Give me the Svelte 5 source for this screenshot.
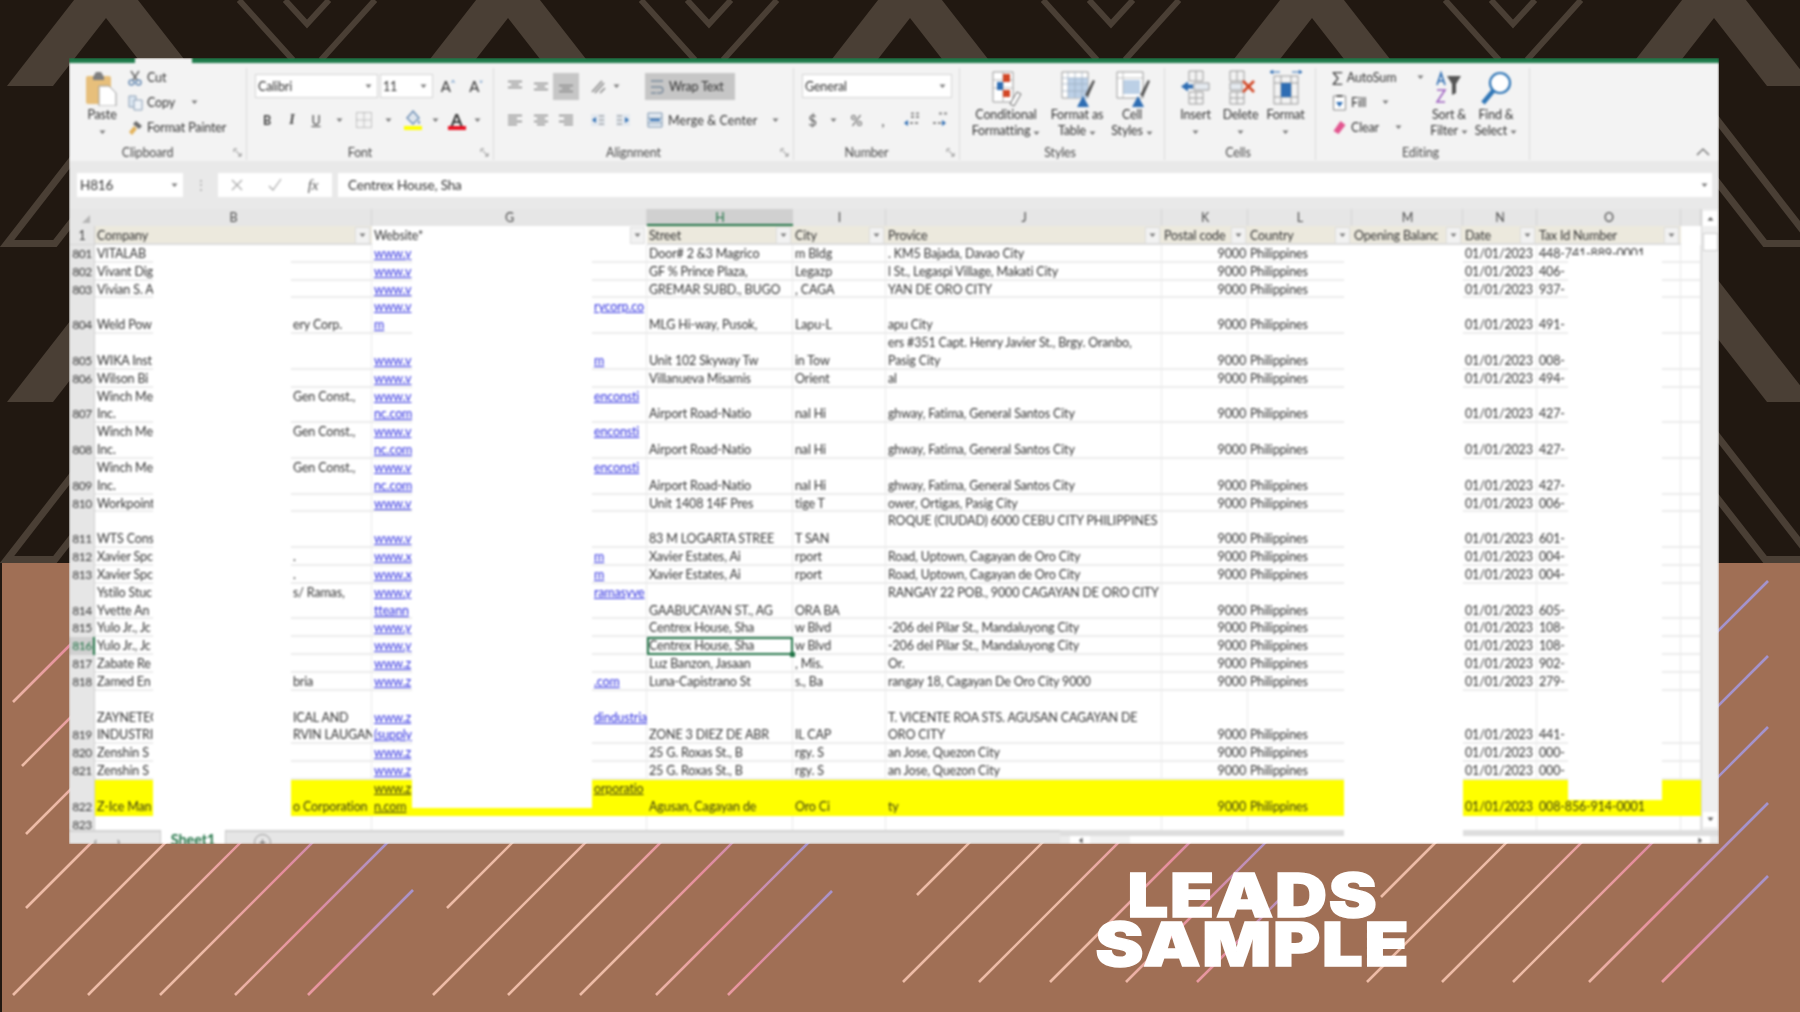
<script>
	// background pattern
	const thickX = [106, 508, 910, 1312, 1714];
	const thinX = [307, 709, 1111, 1513];
	const rowsY = [0, 316];

	const blocks = [
		{ id: "a", dx: 0, dy: 0, right: 413, xs: [13, 88, 160, 235, 308] },
		{ id: "b", dx: 420, dy: 0, right: 832, xs: [433, 508, 580, 656, 728] },
		{ id: "c", dx: 890, dy: -13, right: 1285, xs: [903, 979, 1050, 1126, 1197] },
		{ id: "d", dx: 1354, dy: -13, right: 1768, xs: [1367, 1442, 1513, 1589, 1662] }
	];
	const strays = [[447, 908], [917, 895], [1381, 897]];
	const upperLeft = [[13, 702], [22, 766], [26, 834], [26, 908]];

	// column headers
	const letters = ["B", "G", "H", "I", "J", "K", "L", "M", "N", "O", ""];
	const heads = ["Company", "Website*", "Street", "City", "Provice", "Postal code", "Country", "Opening Balanc", "Date", "Tax Id Number"];

	const w = "www.";
	const rows = [
		["801", "VITALAB", "", w + "y", "", "Door# 2 &3 Magrico", "m Bldg", ". KM5 Bajada, Davao City", "448-741-889-0001"],
		["802", "Vivant Dig", "", w + "v", "", "GF % Prince Plaza,", "Legazp", "l St., Legaspi Village, Makati City", "406-"],
		["803", "Vivian S. A", "", w + "v", "", "GREMAR SUBD., BUGO", ", CAGA", "YAN DE ORO CITY", "937-"],
		["804", "Weld Pow", "ery Corp.", w + "v\nm", "rycorp.co\n", "MLG Hi-way, Pusok,", "Lapu-L", "apu City", "491-"],
		["805", "WIKA Inst", "", w + "v", "m", "Unit 102 Skyway Tw", "in Tow", "ers #351 Capt. Henry Javier St., Brgy. Oranbo,\nPasig City", "008-"],
		["806", "Wilson Bi", "", w + "v", "", "Villanueva Misamis", "Orient", "al", "494-"],
		["807", "Winch Me\nInc.", "Gen Const.,\n", w + "v\nnc.com", "enconsti\n", "Airport Road-Natio", "nal Hi", "ghway, Fatima, General Santos City", "427-"],
		["808", "Winch Me\nInc.", "Gen Const.,\n", w + "v\nnc.com", "enconsti\n", "Airport Road-Natio", "nal Hi", "ghway, Fatima, General Santos City", "427-"],
		["809", "Winch Me\nInc.", "Gen Const.,\n", w + "v\nnc.com", "enconsti\n", "Airport Road-Natio", "nal Hi", "ghway, Fatima, General Santos City", "427-"],
		["810", "Workpoint", "", w + "v", "", "Unit 1408 14F Pres", "tige T", "ower, Ortigas, Pasig City", "006-"],
		["811", "WTS Cons", "", w + "v", "", "83 M LOGARTA STREE", "T SAN", "ROQUE (CIUDAD) 6000 CEBU CITY  PHILIPPINES\n", "601-"],
		["812", "Xavier Spc", ".", w + "x", "m", "Xavier Estates, Ai", "rport", "Road, Uptown, Cagayan de Oro City", "004-"],
		["813", "Xavier Spc", ".", w + "x", "m", "Xavier Estates, Ai", "rport", "Road, Uptown, Cagayan de Oro City", "004-"],
		["814", "Ystilo Stuc\nYvette An", "s/ Ramas,\n", w + "y\ntteann", "ramasyve\n", "GAABUCAYAN ST., AG", "ORA BA", "RANGAY 22 POB., 9000 CAGAYAN DE ORO CITY\n", "605-"],
		["815", "Yulo Jr., Jc", "", w + "y", "", "Centrex House, Sha", "w Blvd", "-206 del Pilar St., Mandaluyong City", "108-"],
		["816", "Yulo Jr., Jc", "", w + "y", "", "Centrex House, Sha", "w Blvd", "-206 del Pilar St., Mandaluyong City", "108-"],
		["817", "Zabate Re", "", w + "z", "", "Luz Banzon, Jasaan", ", Mis.", "Or.", "902-"],
		["818", "Zamed En", "bria", w + "z", ".com", "Luna-Capistrano St", "s., Ba", "rangay 18, Cagayan De Oro City 9000", "279-"],
		["\n\n819", "ZAYNETEC\nINDUSTRI", "ICAL AND\nRVIN LAUGAN", w + "z\n(supply", "dindustria\n", "ZONE 3 DIEZ DE ABR", "IL CAP", "T. VICENTE ROA STS. AGUSAN CAGAYAN DE\nORO CITY", "441-"],
		["820", "Zenshin S", "", w + "z", "", "25 G. Roxas St., B", "rgy. S", "an Jose, Quezon City", "000-"],
		["821", "Zenshin S", "", w + "z", "", "25 G. Roxas St., B", "rgy. S", "an Jose, Quezon City", "000-"],
		["\n822", "Z-Ice Man", "o Corporation", w + "z\nn.com", "orporatio\n", "Agusan, Cagayan de", "Oro Ci", "ty", "008-856-914-0001"],
		["823", "", "", "", "", "", "", "", ""]
	];
</script>

{#snippet caret()}
	<svg class="caret" width="7" height="5" viewBox="0 0 7 5"><path d="M0.5 0.5h6L3.5 4z" fill="#777" /></svg>
{/snippet}

{#snippet lines(t)}
	{#each t.split("\n") as l}
		<div class="ln">{l}</div>
	{/each}
{/snippet}

{#snippet launcher()}
	<svg class="launch" width="9" height="9" viewBox="0 0 9 9"><path d="M1 1h3M1 1v3M3 3l5 5M8 5v3H5" fill="none" stroke="#888" /></svg>
{/snippet}

<div class="page">
	<svg class="backdrop" width="1800" height="1012" viewBox="0 0 1800 1012">
		<defs>
			{#each blocks as b}
				<linearGradient id={"grad-" + b.id} gradientUnits="userSpaceOnUse" x1={220 + b.dx} y1={995 + b.dy} x2={420 + b.dx} y2={895 + b.dy}>
					<stop offset="0" stop-color="#edbba6" />
					<stop offset="0.5" stop-color="#e58c9d" />
					<stop offset="1" stop-color="#a493cc" />
				</linearGradient>
			{/each}
			<linearGradient id="grad-up" gradientUnits="userSpaceOnUse" x1="50" y1="800" x2="204" y2="723">
				<stop offset="0" stop-color="#edbba6" />
				<stop offset="0.5" stop-color="#e58c9d" />
				<stop offset="1" stop-color="#a493cc" />
			</linearGradient>
		</defs>

		<rect width="1800" height="563" fill="#211811" />
		{#each rowsY as y}
			{#each thickX as x}
				<path d="M{x} {y - 41}L{x + 99} {y + 86}H{x + 53}L{x} {y + 18}L{x - 53} {y + 86}H{x - 99}Z" fill="#4a3f35" />
				<path d="M{x} {y + 116}L{x + 99} {y + 243.5}H{x + 51}L{x} {y + 178}L{x - 51} {y + 243.5}H{x - 99}Z" fill="none" stroke="#4a3f35" stroke-width="7" />
			{/each}
		{/each}
		{#each thinX as x}
			<path d="M{x - 68} 0L{x - 14} 60M{x + 68} 0L{x + 14} 60M{x - 22} 0L{x} 24L{x + 22} 0" fill="none" stroke="#4a3f35" stroke-width="6" />
		{/each}

		<rect x="2" y="563" width="1798" height="449" fill="#a06f55" />
		<rect y="563" width="2" height="449" fill="#211811" />

		<g stroke-width="2.6" fill="none">
			{#each blocks as b}
				{#each b.xs as x}
					<path d="M{x} {995 + b.dy}L{b.right} {995 + b.dy - (b.right - x)}" stroke={"url(#grad-" + b.id + ")"} />
				{/each}
			{/each}
			{#each upperLeft as p}
				<path d="M{p[0]} {p[1]}L{p[0] + 120} {p[1] - 120}" stroke="url(#grad-up)" />
			{/each}
			{#each strays as p}
				<path d="M{p[0]} {p[1]}L{p[0] + 120} {p[1] - 120}" stroke="#edbba6" />
			{/each}
		</g>
	</svg>

	<div class="window">
		<div class="titlebar"><div class="home-tab"></div></div>

		<div class="ribbon">
			<section class="group clip">
				<div class="body">
					<div class="big paste">
						<svg width="34" height="36" viewBox="0 0 34 36">
							<rect x="1" y="6" width="25" height="28" rx="2" fill="#e7bf7b" />
							<path d="M8 7l3-5h5l3 5v3H8z" fill="#7f7f7f" />
							<path d="M14 16h10l7 7v13H14z" fill="#fff" stroke="#9a9a9a" />
						</svg>
						<span>Paste</span>
						<span class="arrow">{@render caret()}</span>
					</div>
					<div class="smalls">
						<div class="small">
							<svg width="15" height="16" viewBox="0 0 15 16"><path d="M3 1l6 9M11 1L5 10" stroke="#666" stroke-width="1.5" fill="none" /><circle cx="3.5" cy="12.5" r="2.5" fill="none" stroke="#6d8fb5" stroke-width="1.5" /><circle cx="10.5" cy="12.5" r="2.5" fill="none" stroke="#6d8fb5" stroke-width="1.5" /></svg>
							<span>Cut</span>
						</div>
						<div class="small">
							<svg width="15" height="16" viewBox="0 0 15 16"><path d="M1 1h7v11H1z" fill="#dbe6f1" stroke="#8b9fb5" /><path d="M6 5h8v10H6z" fill="#eef3f8" stroke="#8b9fb5" /></svg>
							<span>Copy</span>
							<span class="arrow-r">{@render caret()}</span>
						</div>
						<div class="small">
							<svg width="15" height="16" viewBox="0 0 15 16"><path d="M8 1l6 5-3 3-6-5z" fill="#6b6b6b" /><path d="M6 6l3 3-5 6-3-3z" fill="#e3b35c" /></svg>
							<span>Format Painter</span>
						</div>
					</div>
				</div>
				<div class="label"><span>Clipboard</span>{@render launcher()}</div>
			</section>

			<section class="group font">
				<div class="body rows">
					<div class="row-a">
						<div class="combo calibri"><span>Calibri</span>{@render caret()}</div>
						<div class="combo size"><span>11</span>{@render caret()}</div>
						<div class="tb"><span class="ab">A<sup>^</sup></span></div>
						<div class="tb"><span class="ab">A<sup>˅</sup></span></div>
					</div>
					<div class="row-b">
						<div class="tb"><b>B</b></div>
						<div class="tb"><i class="it">I</i></div>
						<div class="tb"><u>U</u></div>
						<div class="tb">{@render caret()}</div>
						<div class="tb">
							<svg width="18" height="18" viewBox="0 0 18 18"><path d="M1.5 1.5h15v15h-15zM9 1.5v15M1.5 9h15" fill="none" stroke="#a9a9a9" stroke-dasharray="2 1" /></svg>
						</div>
						<div class="tb">{@render caret()}</div>
						<div class="tb">
							<svg width="20" height="22" viewBox="0 0 20 22"><path d="M10 2l6 7-6 6-6-6z" fill="#dfe6ee" stroke="#6d8fb5" stroke-width="1.4" /><path d="M16 11c1 2 2 3 0 4-2-1-1-2 0-4z" fill="#6d8fb5" /><rect x="1" y="17" width="18" height="4" fill="#ffff00" /></svg>
						</div>
						<div class="tb">{@render caret()}</div>
						<div class="tb fontcolor">
							<svg width="20" height="22" viewBox="0 0 20 22"><rect x="1" y="17" width="18" height="4" fill="#e81123" /></svg>
							<span>A</span>
						</div>
						<div class="tb">{@render caret()}</div>
					</div>
				</div>
				<div class="label"><span>Font</span>{@render launcher()}</div>
			</section>

			<section class="group align">
				<div class="body rows">
					<div class="row-a">
						<div class="tb"><svg class="ai" viewBox="0 0 16 12"><path d="M1 1h14M4 4h8M1 7h14" /></svg></div>
						<div class="tb"><svg class="ai" viewBox="0 0 16 12"><path d="M1 3h14M4 6h8M1 9h14" /></svg></div>
						<div class="tb active"><svg class="ai" viewBox="0 0 16 12"><path d="M1 5h14M4 8h8M1 11h14" /></svg></div>
						<div></div>
						<div class="tb"><svg width="18" height="18" viewBox="0 0 18 18"><path d="M3 14L13 3M6 15l9-10M11 15l5-5" stroke="#8a8a8a" stroke-width="1.6" fill="none" /></svg></div>
						<div class="tb">{@render caret()}</div>
						<div></div>
						<div class="wrap">
							<svg width="14" height="16" viewBox="0 0 14 16"><path d="M1 2h12M1 14h5M1 8h9a3 3 0 0 1 0 6H7" fill="none" stroke="#7a8a9c" stroke-width="1.3" /></svg>
							<span>Wrap Text</span>
						</div>
					</div>
					<div class="row-b">
						<div class="tb"><svg class="ai" viewBox="0 0 16 12"><path d="M1 1h14M1 4h9M1 7h14M1 10h9" /></svg></div>
						<div class="tb"><svg class="ai" viewBox="0 0 16 12"><path d="M1 1h14M4 4h8M1 7h14M4 10h8" /></svg></div>
						<div class="tb"><svg class="ai" viewBox="0 0 16 12"><path d="M1 1h14M6 4h9M1 7h14M6 10h9" /></svg></div>
						<div></div>
						<div class="tb"><svg width="18" height="16" viewBox="0 0 18 16"><path d="M2 2h14v12H2z" fill="#e4e9ef" /><path d="M3 8l4-3v6z" fill="#2e6db3" /><path d="M10 4h5M10 8h5M10 12h5" stroke="#8a8a8a" /></svg></div>
						<div class="tb"><svg width="18" height="16" viewBox="0 0 18 16"><path d="M2 2h14v12H2z" fill="#e4e9ef" /><path d="M15 8l-4-3v6z" fill="#2e6db3" /><path d="M3 4h5M3 8h5M3 12h5" stroke="#8a8a8a" /></svg></div>
						<div class="merge">
							<svg width="16" height="16" viewBox="0 0 16 16"><path d="M1 1h14v14H1zM1 6h14M1 11h14" fill="#e6edf4" stroke="#7a93ad" /><path d="M3 8h10" stroke="#2e6db3" stroke-width="2" /></svg>
							<span>Merge &amp; Center</span>
							<span class="arrow-r">{@render caret()}</span>
						</div>
					</div>
				</div>
				<div class="label"><span>Alignment</span>{@render launcher()}</div>
			</section>

			<section class="group number">
				<div class="body rows">
					<div class="row-a">
						<div class="combo general"><span>General</span>{@render caret()}</div>
					</div>
					<div class="row-b">
						<div class="tb big-glyph">$</div>
						<div class="tb">{@render caret()}</div>
						<div class="tb big-glyph">%</div>
						<div class="tb big-glyph">,</div>
						<div class="tb"><svg width="18" height="16" viewBox="0 0 18 16"><path d="M8 1.500h8M8 5h8M7 11h9" stroke="#8a8a8a" stroke-width="2" stroke-dasharray="3 2" /><path d="M1 11l4-3v6z" fill="#2e6db3" /></svg></div>
						<div class="tb"><svg width="18" height="16" viewBox="0 0 18 16"><path d="M8 1.500h8M2 11h8" stroke="#8a8a8a" stroke-width="2" stroke-dasharray="3 2" /><path d="M15 11l-4-3v6z" fill="#2e6db3" /></svg></div>
					</div>
				</div>
				<div class="label"><span>Number</span>{@render launcher()}</div>
			</section>

			<section class="group styles">
				<div class="body">
					<div class="big cf">
						<svg width="36" height="38" viewBox="0 0 36 36">
							<path d="M5 1h20v30H5z" fill="#fff" stroke="#9a9a9a" />
							<path d="M5 9h20M5 17h20M15 1v30" stroke="#b5b5b5" />
							<path d="M15 3h7v8h-7z" fill="#d24726" /><path d="M9 11h6v8H9z" fill="#2e6db3" /><path d="M15 19h7v7h-7z" fill="#d24726" />
							<path d="M22 33l7-12 4 2-7 12z" fill="#fff" stroke="#666" />
						</svg>
						<span>Conditional</span>
						<span>Formatting {@render caret()}</span>
					</div>
					<div class="big fat">
						<svg width="36" height="38" viewBox="0 0 36 36">
							<path d="M3 1h26v26H3z" fill="#fff" stroke="#9a9a9a" />
							<path d="M9 7h20v20H9z" fill="#bcd0e6" />
							<path d="M3 7h26M3 13h26M3 20h26M9 1v26M16 1v26M23 1v26" stroke="#9ab" stroke-width=".7" />
							<path d="M26 24L34 9l2 1-7 16z" fill="#555" /><path d="M18 36l6-11 6 11z" fill="#2e6db3" />
						</svg>
						<span>Format as</span>
						<span>Table {@render caret()}</span>
					</div>
					<div class="big cs">
						<svg width="36" height="38" viewBox="0 0 36 36">
							<path d="M3 1h26v26H3z" fill="#fff" stroke="#9a9a9a" />
							<path d="M9 9h17v14H9z" fill="#bcd0e6" />
							<path d="M3 7h26M9 1v26" stroke="#aaa" stroke-width=".7" />
							<path d="M26 24L34 9l2 1-7 16z" fill="#555" /><path d="M18 36l6-11 6 11z" fill="#2e6db3" />
						</svg>
						<span>Cell</span>
						<span>Styles {@render caret()}</span>
					</div>
				</div>
				<div class="label"><span>Styles</span></div>
			</section>

			<section class="group cells">
				<div class="body">
					<div class="big cellb">
						<svg width="34" height="36" viewBox="0 0 34 36">
							<path d="M10 1h14v10H10zM17 1v10M10 22h14v12H10zM17 22v12M10 28h14" fill="none" stroke="#9a9a9a" />
							<path d="M2 16.500l7-5v3h5v4H9v3z" fill="#2e6db3" />
							<path d="M15 13h15v7H15z" fill="#e4e9ef" stroke="#9a9a9a" />
						</svg>
						<span>Insert</span>
						<span class="arrow">{@render caret()}</span>
					</div>
					<div class="big cellb">
						<svg width="34" height="36" viewBox="0 0 34 36">
							<path d="M6 1h14v10H6zM13 1v10M6 22h14v12H6zM13 22v12M6 28h14" fill="none" stroke="#9a9a9a" />
							<path d="M6 13h12v7H6z" fill="#e4e9ef" stroke="#9a9a9a" />
							<path d="M19 11l11 11M30 11L19 22" stroke="#d24726" stroke-width="2.600" />
						</svg>
						<span>Delete</span>
						<span class="arrow">{@render caret()}</span>
					</div>
					<div class="big cellb">
						<svg width="34" height="36" viewBox="0 0 34 36">
							<path d="M5 2h6M1 2l3-1.500v3zM23 2h6M33 2l-3-1.500v3z" fill="#2e6db3" stroke="#2e6db3" />
							<path d="M5 6h24v28H5zM12 6v28M22 6v28M5 13h24M5 27h24" fill="none" stroke="#9a9a9a" />
							<path d="M12 13h10v14H12z" fill="#2e6db3" />
						</svg>
						<span>Format</span>
						<span class="arrow">{@render caret()}</span>
					</div>
				</div>
				<div class="label"><span>Cells</span></div>
			</section>

			<section class="group editing">
				<div class="body">
					<div class="smalls">
						<div class="small">
							<span class="sigma">Σ</span>
							<span>AutoSum</span>
							<span class="arrow-r wide">{@render caret()}</span>
						</div>
						<div class="small">
							<svg width="14" height="16" viewBox="0 0 14 16"><path d="M1 1h12v14H1z" fill="#fff" stroke="#8a8a8a" /><path d="M4 1h6" stroke="#555" stroke-width="2" /><path d="M7 12L3.500 7h7z" fill="#2e6db3" /></svg>
							<span>Fill</span>
							<span class="arrow-r">{@render caret()}</span>
						</div>
						<div class="small">
							<svg width="14" height="16" viewBox="0 0 14 16"><path d="M8 1l5 4-7 9-5-3z" fill="#e2558f" /></svg>
							<span>Clear</span>
							<span class="arrow-r">{@render caret()}</span>
						</div>
					</div>
					<div class="big sort">
						<svg width="34" height="36" viewBox="0 0 34 36">
							<path d="M5 15L9 3l4 12M6.500 11h5" fill="none" stroke="#2e6db3" stroke-width="1.600" />
							<path d="M5 20h8l-8 12h8" fill="none" stroke="#9d5fc0" stroke-width="1.600" />
							<path d="M15 6h14l-5 8v9l-4 2V14z" fill="#555" />
						</svg>
						<span>Sort &amp;</span>
						<span>Filter {@render caret()}</span>
					</div>
					<div class="big find">
						<svg width="34" height="36" viewBox="0 0 34 36">
							<circle cx="21" cy="13" r="10" fill="#fff" stroke="#2e75b6" stroke-width="2.200" />
							<path d="M14 21L4 33" stroke="#2e75b6" stroke-width="4.500" />
						</svg>
						<span>Find &amp;</span>
						<span>Select {@render caret()}</span>
					</div>
				</div>
				<div class="label"><span>Editing</span></div>
			</section>

			<div class="collapse">
				<svg width="14" height="8" viewBox="0 0 14 8"><path d="M1 7l6-6 6 6" fill="none" stroke="#666" stroke-width="1.200" /></svg>
			</div>
		</div>

		<div class="formula">
			<div class="namebox"><span>H816</span>{@render caret()}</div>
			<div class="dots">⋮</div>
			<div class="fbtns">
				<svg width="14" height="14" viewBox="0 0 14 14"><path d="M2 2l10 10M12 2L2 12" stroke="#aaa" stroke-width="1.200" /></svg>
				<svg width="14" height="14" viewBox="0 0 14 14"><path d="M1 8l4 4 8-11" fill="none" stroke="#aaa" stroke-width="1.200" /></svg>
				<i class="fx">fx</i>
			</div>
			<div class="finput">
				<span>Centrex House, Sha</span>
				{@render caret()}
			</div>
		</div>

		<div class="sheet">
			<div class="sheet-main">
				<div class="letters">
					<div class="corner"><svg width="10" height="10" viewBox="0 0 10 10"><path d="M9 1v8H1z" fill="#b5b5b5" /></svg></div>
					{#each letters as l}
						<div class="letter" class:sel={l === "H"}>{l}</div>
					{/each}
				</div>

				<div class="letters heads">
					<div class="num one">1</div>
					{#each heads as h, i}
						<div class="head" class:plain={i === 1}>
							<span>{h}</span>
							<span class="filter">{@render caret()}</span>
						</div>
					{/each}
					<div class="head plain"></div>
				</div>

				<div class="cells-grid">
					{#each rows as r}
						{@const hl = r[0].endsWith("822")}
						{@const blank = r[0] === "823"}
						<div class="c num" class:cur={r[0] === "816"}>{@render lines(r[0])}</div>
						<div class="c nv" class:hl>{@render lines(r[1])}</div>
						<div class="c nv"></div>
						<div class="c" class:hl>{@render lines(r[2])}</div>
						<div class="c nv link" class:hl>{@render lines(r[3])}</div>
						<div class="c nv" class:hl></div>
						<div class="c link" class:hl>{@render lines(r[4])}</div>
						<div class="c" class:hl class:picked={r[0] === "816"}>{@render lines(r[5])}</div>
						<div class="c" class:hl>{@render lines(r[6])}</div>
						<div class="c" class:hl>{@render lines(r[7])}</div>
						<div class="c right" class:hl>{@render lines(blank ? "" : "9000")}</div>
						<div class="c" class:hl>{@render lines(blank ? "" : "Philippines")}</div>
						<div class="c"></div>
						<div class="c" class:hl>{@render lines(blank ? "" : "01/01/2023")}</div>
						<div class="c" class:hl>{@render lines(r[8])}</div>
						<div class="c" class:hl></div>
					{/each}
				</div>
			</div>

			<div class="vscroll">
				<div class="vbtn"><svg width="7" height="5" viewBox="0 0 7 5"><path d="M0.500 4.500h6L3.500 1z" fill="#555" /></svg></div>
				<div class="vthumb"></div>
				<div class="vbtn down"><svg width="7" height="5" viewBox="0 0 7 5"><path d="M0.500 0.500h6L3.500 4z" fill="#555" /></svg></div>
			</div>
		</div>

		<div class="tabs">
			<div class="tabs-left">
				<div class="nav">‹</div>
				<div class="nav">›</div>
				<div class="tab">Sheet1</div>
				<div class="plus">+</div>
			</div>
			<div class="hscroll">
				<div class="strip"></div>
				<div class="hbar">
					<div class="hbtn"><svg width="5" height="7" viewBox="0 0 5 7"><path d="M4.500 0.500v6L1 3.500z" fill="#555" /></svg></div>
					<div class="hthumb"></div>
					<div class="htrack"></div>
					<div class="hbtn"><svg width="5" height="7" viewBox="0 0 5 7"><path d="M0.500 0.500v6L4 3.500z" fill="#555" /></svg></div>
				</div>
			</div>
		</div>

		<!-- hidden columns were whited out in the source picture -->
		<div class="mask mask-b"></div>
		<div class="mask mask-g"></div>
		<div class="mask mask-m"></div>
		<div class="mask mask-o"></div>
	</div>

	<div class="caption">LEADS<br />SAMPLE</div>
</div>

<style>
	:global(body) {
		margin: 0;
		background: #a06f55;
	}

	.page {
		position: relative;
		width: 1800px;
		height: 1012px;
		overflow: hidden;
		font-family: Lato, "Liberation Sans", sans-serif;
	}

	.backdrop {
		position: absolute;
		left: 0;
		top: 0;
	}

	/* the screenshot is soft, but its outer edge is crisp: clip-path runs after the filter */
	.window {
		position: relative;
		width: 1650px;
		height: 786px;
		margin: 58px 0 0 69px;
		background: #fff;
		color: #333;
		font-size: 12.5px;
		letter-spacing: -0.15px;
		filter: blur(0.8px);
		clip-path: inset(0);
		display: flex;
		flex-direction: column;
		overflow: hidden;
	}

	/* title strip with the home tab cut into it */
	.titlebar {
		height: 5px;
		background: #1e7b4b;
		flex: none;
		padding-left: 66px;
	}

	.home-tab {
		width: 57px;
		height: 5px;
		background: #f3f3f3;
	}

	.ribbon {
		display: flex;
		height: 98px;
		flex: none;
		background: #f3f3f3;
	}

	.group {
		display: flex;
		flex-direction: column;
		margin-top: 5px;
		height: 92px;
		border-right: 1px solid #dadada;
		box-sizing: border-box;
	}

	.clip { width: 178px; }
	.font { width: 247px; }
	.align { width: 300px; }
	.number { width: 166px; }
	.styles { width: 205px; }
	.cells { width: 151px; }
	.editing { width: 214px; }

	.body {
		flex: 1;
		display: flex;
	}

	.rows {
		flex-direction: column;
		padding-left: 8px;
	}

	.label {
		display: flex;
		align-items: center;
		height: 16px;
		padding-right: 4px;
		color: #4a4a4a;
	}

	.label span {
		flex: 1;
		text-align: center;
	}

	.launch {
		margin-left: 7px;
	}

	.big {
		display: flex;
		flex-direction: column;
		align-items: center;
		line-height: 16px;
		white-space: nowrap;
	}

	.big svg:first-child {
		margin: 2px 0 1px;
		flex: none;
	}

	.styles .big svg:first-child {
		margin: 2px 0 -1px;
	}

	.arrow {
		display: block;
		height: 16px;
	}

	.caret {
		vertical-align: middle;
	}

	.paste {
		width: 40px;
		margin-left: 13px;
	}

	.smalls {
		display: flex;
		flex-direction: column;
		margin: -3px 0 0 6px;
	}

	.small {
		display: flex;
		align-items: center;
		gap: 4px;
		height: 25px;
		white-space: nowrap;
	}

	.small svg:first-child {
		width: 15px;
		flex: none;
	}

	.arrow-r {
		margin-left: 8px;
		display: flex;
	}

	.arrow-r.wide {
		margin-left: 13px;
	}

	.combo {
		display: flex;
		align-items: center;
		justify-content: space-between;
		height: 24px;
		padding: 0 5px 0 2px;
		box-sizing: border-box;
		background: #fff;
		border: 1px solid #d4d4d4;
	}

	.tb {
		display: flex;
		align-items: center;
		justify-content: center;
		position: relative;
	}

	.font .row-a {
		display: grid;
		grid-template-columns: 123px 53px 26px 26px;
		gap: 0 2px;
		margin-top: 6px;
		height: 24px;
	}

	.font .row-b {
		display: grid;
		grid-template-columns: 24px 26px 22px 24px 25px 25px 24px 21px 21px 20px;
		margin-top: 10px;
		height: 24px;
		color: #444;
	}

	.ab {
		font-size: 15px;
	}

	.ab sup {
		font-size: 8px;
		color: #2e6db3;
	}

	.it {
		font-family: "Liberation Serif", serif;
		font-weight: bold;
		font-size: 14px;
	}

	.fontcolor span {
		position: absolute;
		top: 1px;
		font-size: 17px;
		font-weight: bold;
		color: #333;
	}

	.align .row-a {
		display: grid;
		grid-template-columns: 26px 25px 26px 6px 25px 12px 23px 90px;
		margin-top: 5px;
		height: 27px;
	}

	.align .row-b {
		display: grid;
		grid-template-columns: 26px 25px 26px 6px 25px 25px 1fr;
		margin-top: 7px;
		height: 26px;
	}

	.ai {
		width: 16px;
		height: 13px;
		fill: none;
		stroke: #8a8a8a;
		stroke-width: 1.5;
	}

	.active {
		background: #c6c6c6;
	}

	.wrap {
		display: flex;
		align-items: center;
		gap: 5px;
		padding-left: 5px;
		background: #c6c6c6;
		white-space: nowrap;
	}

	.merge {
		display: flex;
		align-items: center;
		gap: 5px;
		padding-left: 12px;
		white-space: nowrap;
		letter-spacing: 0.1px;
	}

	.merge .arrow-r {
		margin-left: 10px;
	}

	.number .row-a {
		margin-top: 6px;
		height: 24px;
	}

	.general {
		width: 150px;
	}

	.number .row-b {
		display: grid;
		grid-template-columns: 21px 21px 25px 28px 29px 28px;
		margin-top: 10px;
		height: 24px;
	}

	.big-glyph {
		font-size: 15px;
		color: #555;
	}

	.styles .body {
		padding-left: 4px;
	}

	.cf { width: 84px; }
	.fat { width: 58px; }
	.cs { width: 52px; }

	.cells .body {
		padding-left: 8px;
	}

	.cellb { width: 45px; }

	.editing .smalls {
		width: 95px;
		margin-left: 16px;
		flex: none;
	}

	.sigma {
		width: 15px;
		font-size: 18px;
		color: #444;
		text-align: center;
	}

	.sort { width: 44px; }
	.find { width: 50px; }

	.collapse {
		flex: 1;
		display: flex;
		align-items: flex-end;
		justify-content: flex-end;
		padding: 0 9px 5px 0;
	}

	.formula {
		display: flex;
		align-items: flex-start;
		flex: none;
		box-sizing: border-box;
		height: 48px;
		padding: 12px 7px 0 8px;
		background: #e9e9e9;
		font-size: 13.5px;
	}

	.namebox {
		display: flex;
		align-items: center;
		justify-content: space-between;
		width: 106px;
		height: 24px;
		padding: 0 5px 0 3px;
		box-sizing: border-box;
		background: #fff;
	}

	.dots {
		width: 35px;
		height: 24px;
		line-height: 24px;
		text-align: center;
		color: #aaa;
	}

	.fbtns {
		display: grid;
		grid-template-columns: repeat(3, 1fr);
		align-items: center;
		justify-items: center;
		width: 114px;
		height: 24px;
		margin-right: 6px;
		background: #fff;
	}

	.fx {
		font-family: "Liberation Serif", serif;
		font-size: 15px;
		color: #555;
	}

	.finput {
		flex: 1;
		display: flex;
		align-items: center;
		justify-content: space-between;
		height: 24px;
		padding: 0 4px 0 10px;
		background: #fff;
	}

	.sheet {
		display: flex;
		flex: 1;
		min-height: 0;
	}

	.sheet-main {
		width: 1632px;
		flex: none;
		overflow: hidden;
	}

	.letters {
		display: grid;
		grid-template-columns: 26px 277px 275px 146px 93px 276px 86px 104px 111px 74px 144px 20px;
		height: 17px;
		background: #e6e6e6;
		color: #4a4a4a;
	}

	.corner {
		display: flex;
		align-items: flex-end;
		justify-content: flex-end;
		padding: 0 4px 2px 0;
	}

	.letter {
		text-align: center;
		line-height: 17px;
		box-shadow: inset -1px 0 #d4d4d4;
	}

	.letter.sel {
		background: #d0d0d0;
		color: #217346;
		box-shadow: inset 0 -2px #217346;
	}

	.heads {
		height: 19px;
		background: #fff;
		color: #333;
	}

	.num {
		background: #e6e6e6;
		color: #444;
		box-shadow: inset -1px 0 #cfcfcf, inset 0 -1px #d8d8d8;
		text-align: center;
	}

	.one {
		line-height: 19px;
	}

	.head {
		display: flex;
		align-items: center;
		justify-content: space-between;
		padding: 0 2px;
		background: #ece9dd;
		box-shadow: inset 0 -2px #dcdcdc;
		white-space: nowrap;
		overflow: hidden;
	}

	.head.plain {
		background: #fff;
		box-shadow: none;
	}

	.filter {
		display: flex;
		align-items: center;
		justify-content: center;
		flex: none;
		width: 15px;
		height: 17px;
		background: #f2f2f2;
		box-shadow: inset 0 0 0 1px #dcdcdc;
	}

	.head:last-child .filter {
		display: none;
	}

	.cells-grid {
		display: grid;
		grid-template-columns: 26px 58px 138px 81px 40px 180px 55px 146px 93px 276px 86px 104px 111px 74px 144px 20px;
	}

	.c {
		display: flex;
		flex-direction: column;
		justify-content: flex-end;
		padding-left: 2px;
		min-width: 0;
		overflow: hidden;
		color: #333;
		box-shadow: inset 0 -2px #ececec, inset -1px 0 #e9e9e9;
		position: relative;
	}

	.c.nv {
		box-shadow: inset 0 -2px #ececec;
	}

	.c.num {
		padding-left: 0;
		background: #e6e6e6;
		box-shadow: inset -1px 0 #cfcfcf;
		font-size: 12px;
		letter-spacing: -0.4px;
		color: #3a3a3a;
	}

	.c.num.cur {
		background: #d0d0d0;
		color: #217346;
		box-shadow: inset -2px 0 #217346;
	}

	.c.right {
		text-align: right;
		padding: 0 2px 0 0;
	}

	.c.link {
		color: #3030e0;
		text-decoration: underline;
	}

	.c.hl {
		background: #ffff00;
		box-shadow: none;
		color: #3a3a14;
	}

	.c.picked {
		box-shadow: inset 0 0 0 2px #217346;
		overflow: visible;
		z-index: 1;
	}

	/* fill handle on the active cell */
	.c.picked::after {
		content: "";
		position: absolute;
		right: -2px;
		bottom: -2px;
		width: 5px;
		height: 5px;
		background: #217346;
	}

	.ln {
		height: 17.84px;
		line-height: 17.84px;
		white-space: nowrap;
	}

	.vscroll {
		flex: 1;
		display: flex;
		flex-direction: column;
		align-items: center;
		padding-top: 2px;
		background: #efefef;
		box-shadow: inset 1px 0 #d6d6d6;
	}

	.vbtn {
		display: flex;
		align-items: center;
		justify-content: center;
		width: 14px;
		height: 15px;
		background: #fff;
	}

	.vbtn.down {
		margin-top: auto;
		margin-bottom: 3px;
	}

	.vthumb {
		width: 15px;
		height: 18px;
		margin-top: 7px;
		background: #fff;
		box-shadow: inset 0 0 0 1px #cfcfcf;
	}

	.tabs {
		display: flex;
		height: 14px;
		flex: none;
		overflow: hidden;
	}

	.tabs-left {
		display: flex;
		width: 991px;
		flex: none;
		background: #e6e6e6;
		box-shadow: inset 0 2px #d2d2d2;
		color: #666;
	}

	.nav {
		width: 23px;
		margin-left: 15px;
		line-height: 24px;
		text-align: center;
	}

	.nav + .nav {
		margin: 0 30px 0 0;
	}

	.tab {
		width: 66px;
		box-sizing: border-box;
		background: #fff;
		border: solid #c9c9c9;
		border-width: 0 1px;
		color: #217346;
		font-size: 14.5px;
		font-weight: bold;
		line-height: 20px;
		text-align: center;
	}

	.plus {
		width: 15px;
		height: 15px;
		margin: 4px 0 0 28px;
		border: 1px solid #999;
		border-radius: 50%;
		font-size: 12px;
		line-height: 14px;
		text-align: center;
	}

	.hscroll {
		flex: 1;
	}

	.strip {
		height: 6px;
		background: #dedede;
	}

	.hbar {
		display: flex;
		height: 8px;
		padding: 0 9px 0 10px;
		background: #ececec;
	}

	.hbtn {
		display: flex;
		align-items: center;
		justify-content: center;
		width: 20px;
		background: #fff;
	}

	.hthumb {
		width: 40px;
		background: #f2f2f2;
	}

	.htrack {
		flex: 1;
		background: #fff;
	}

	.mask {
		position: absolute;
		background: #fff;
	}

	.mask-b {
		left: 84px;
		top: 187px;
		width: 138px;
		height: 585px;
	}

	.mask-g {
		left: 343px;
		top: 187px;
		width: 180px;
		height: 563px;
	}

	.mask-m {
		left: 1275px;
		top: 187px;
		width: 119px;
		height: 599px;
	}

	.mask-o {
		left: 1499px;
		top: 197px;
		width: 94px;
		height: 545px;
	}

	.caption {
		position: relative;
		width: 400px;
		margin: 27px 0 0 1053px;
		color: #fff;
		font-family: Inter, "Liberation Sans", sans-serif;
		font-size: 60px;
		font-weight: 900;
		line-height: 49px;
		letter-spacing: 1.5px;
		text-align: center;
		-webkit-text-stroke: 1.5px #fff;
		transform: scaleX(1.2);
	}
</style>
